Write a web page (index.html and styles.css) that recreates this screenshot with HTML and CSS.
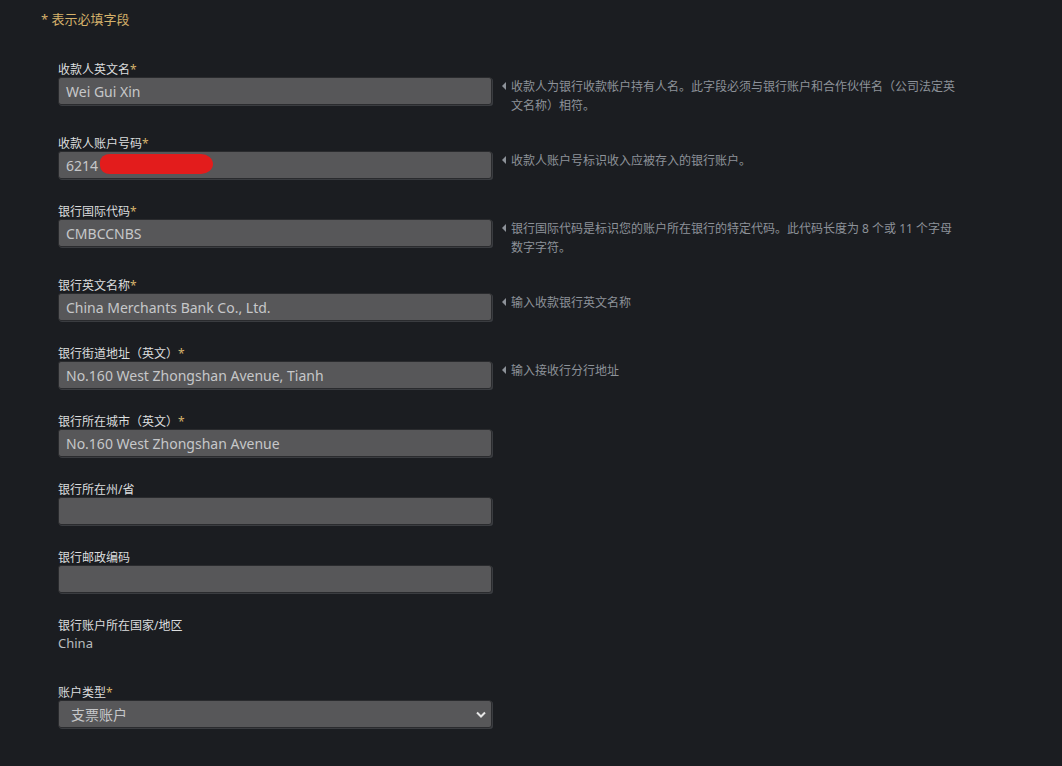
FILE: index.html
```html
<!DOCTYPE html>
<html lang="zh-CN">
<head>
<meta charset="utf-8">
<link rel="stylesheet" href="styles.css">
</head>
<body>
<div class="page">
  <div class="req-note">* 表示必填字段</div>

  <div class="form">
    <div class="field">
      <div class="label">收款人英文名<span class="star">*</span></div>
      <div class="row">
        <div class="input"><span>Wei Gui Xin</span></div>
        <div class="help">收款人为银行收款帐户持有人名。此字段必须与银行账户和合作伙伴名（公司法定英文名称）相符。</div>
      </div>
    </div>

    <div class="field">
      <div class="label">收款人账户号码<span class="star">*</span></div>
      <div class="row">
        <div class="input redacted-wrap"><span>6214</span><span class="redact"></span></div>
        <div class="help">收款人账户号标识收入应被存入的银行账户。</div>
      </div>
    </div>

    <div class="field">
      <div class="label">银行国际代码<span class="star">*</span></div>
      <div class="row">
        <div class="input"><span>CMBCCNBS</span></div>
        <div class="help">银行国际代码是标识您的账户所在银行的特定代码。此代码长度为 8 个或 11 个字母数字字符。</div>
      </div>
    </div>

    <div class="field">
      <div class="label">银行英文名称<span class="star">*</span></div>
      <div class="row">
        <div class="input"><span>China Merchants Bank Co., Ltd.</span></div>
        <div class="help">输入收款银行英文名称</div>
      </div>
    </div>

    <div class="field">
      <div class="label">银行街道地址（英文）<span class="star">*</span></div>
      <div class="row">
        <div class="input"><span>No.160 West Zhongshan Avenue, Tianh</span></div>
        <div class="help">输入接收行分行地址</div>
      </div>
    </div>

    <div class="field">
      <div class="label">银行所在城市（英文）<span class="star">*</span></div>
      <div class="row">
        <div class="input"><span>No.160 West Zhongshan Avenue</span></div>
      </div>
    </div>

    <div class="field">
      <div class="label">银行所在州/省</div>
      <div class="row">
        <div class="input"></div>
      </div>
    </div>

    <div class="field">
      <div class="label">银行邮政编码</div>
      <div class="row">
        <div class="input"></div>
      </div>
    </div>

    <div class="field static">
      <div class="label">银行账户所在国家/地区</div>
      <div class="value">China</div>
    </div>

    <div class="field">
      <div class="label">账户类型<span class="star">*</span></div>
      <div class="row">
        <div class="input select">
          <span class="sel-text">支票账户</span>
          <svg class="chev" width="10" height="7" viewBox="0 0 10 7"><path d="M1 1.5 L5 5.5 L9 1.5" fill="none" stroke="#e6e6e6" stroke-width="2"/></svg>
        </div>
      </div>
    </div>
  </div>
</div>
</body>
</html>
```

FILE: styles.css
```css
* { box-sizing: border-box; }
html, body {
  margin: 0;
  padding: 0;
  background: #1b1d21;
}
body {
  font-family: "Noto Sans", "Noto Sans CJK SC", sans-serif;
  color: #dcdedf;
  width: 1062px;
  height: 766px;
  overflow: hidden;
}
.page {
  padding: 10px 0 0 41px;
}
.req-note {
  color: #d5b16b;
  font-size: 13px;
  line-height: 18px;
}
.form {
  padding: 34px 0 0 17px;
  display: flex;
  flex-direction: column;
  gap: 20px;
}
.field {
  display: flex;
  flex-direction: column;
  gap: 2px;
}
.label {
  height: 13px;
  font-size: 12px;
  line-height: 16px;
  color: #dcdedf;
}
.star {
  color: #d5b16b;
}
.row {
  display: flex;
  align-items: flex-start;
  gap: 8px;
}
.input {
  position: relative;
  flex: none;
  width: 434px;
  height: 28px;
  margin-bottom: 5px;
  background: #575759;
  border: 1px solid #2a2b2e;
  border-radius: 3px;
  box-shadow: 1px 1px 0 #3a3c40;
  display: flex;
  align-items: center;
  padding: 0 7px;
  font-size: 14px;
  color: #c6c7c9;
}
.redact {
  position: absolute;
  left: 41px;
  top: 2px;
  width: 113px;
  height: 20px;
  background: #e31c1c;
  border-radius: 10px 12px 12px 10px / 8px 10px 10px 8px;
}
.help {
  position: relative;
  width: 456px;
  padding: 0 0 1px 11px;
  font-size: 12px;
  line-height: 19px;
  color: #8d9299;
}
.help::before {
  content: "";
  position: absolute;
  left: 2px;
  top: 5px;
  border-style: solid;
  border-width: 4px 4px 4px 0;
  border-color: transparent #8d9299 transparent transparent;
}
.static {
  gap: 3px;
  padding-bottom: 13px;
}
.value {
  font-size: 13px;
  line-height: 18px;
  color: #b8bcbf;
}
.select {
  padding: 0 5px 0 12px;
  justify-content: space-between;
}
.sel-text {
  color: #c6c7c9;
}
.chev {
  display: block;
}
```
